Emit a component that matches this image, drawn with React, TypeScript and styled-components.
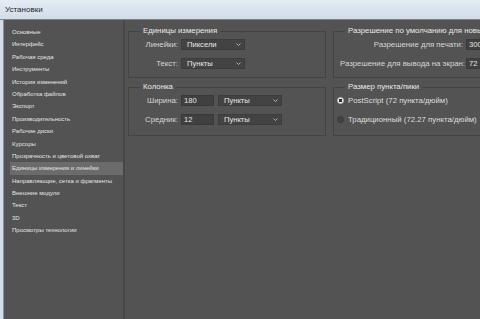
import { createGlobalStyle, styled } from 'styled-components';

const GlobalStyle = createGlobalStyle`
    html, body {
        margin: 0;
        padding: 0;
        background: #535353;
    }
    body {
        font-family: "Liberation Sans", Arial, sans-serif;
        overflow: hidden;
    }
`;

const Window = styled.div`
    display: flex;
    flex-direction: column;
    width: 480px;
    height: 319px;
    overflow: hidden;
`;

const TitleBar = styled.div`
    display: flex;
    align-items: center;
    flex: none;
    height: 19px;
    padding-left: 5px;
    background: linear-gradient(#e4ecf4, #d2dce8);
    color: #1d2430;
    font-size: 8px;
    border-bottom: 1px solid #7d848c;
`;

const Body = styled.div`
    display: flex;
    flex: 1;
    min-height: 0;
`;

const Frame = styled.div`
    flex: none;
    width: 3px;
    background: #d3dde8;
    border-right: 1px solid #8b939c;
`;

const Sidebar = styled.ul`
    flex: none;
    list-style: none;
    margin: 0;
    width: 113px;
    padding: 6px 0 0 6px;
    border-right: 2px solid #474747;
`;

const NavItem = styled.li<{ $active?: boolean }>`
    height: 12.4px;
    line-height: 12.4px;
    padding-left: 2px;
    font-size: 6px;
    white-space: nowrap;
    color: #e4e4e4;
    background: ${(p) => (p.$active ? '#6b6b6b' : 'transparent')};
`;

const Content = styled.div`
    flex: none;
    display: grid;
    grid-template-columns: 198px 200px;
    grid-template-rows: 52px 54px;
    column-gap: 7px;
    row-gap: 4px;
    padding: 6px 0 0 3px;
    align-content: start;
`;

const Group = styled.fieldset`
    margin: 0;
    padding: 2px 6px 0 6px;
    border: 1px solid #444444;
    min-width: 0;
    display: flex;
    flex-direction: column;
    gap: 7px;
`;

const Legend = styled.legend`
    margin-left: 5px;
    padding: 0 3px;
    font-size: 7.8px;
    line-height: 10px;
    color: #e8e8e8;
    white-space: nowrap;
`;

const Row = styled.div<{ $label: number }>`
    display: grid;
    grid-template-columns: ${(p) => p.$label}px auto auto;
    column-gap: 3px;
    align-items: center;
    justify-content: start;
    height: 12px;
`;

const Label = styled.span`
    font-size: 7.8px;
    color: #d6d6d6;
    text-align: right;
    white-space: nowrap;
`;

const Select = styled.div<{ $w: number }>`
    display: flex;
    align-items: center;
    justify-content: space-between;
    width: ${(p) => p.$w}px;
    height: 11px;
    box-sizing: border-box;
    padding: 0 3px 0 5px;
    background: #434343;
    border: 1px solid #3c3c3c;
    font-size: 7.6px;
    color: #e6e6e6;
`;

const Input = styled.div<{ $w: number }>`
    display: flex;
    align-items: center;
    width: ${(p) => p.$w}px;
    height: 11px;
    box-sizing: border-box;
    padding-left: 2px;
    margin-right: 1px;
    background: #404040;
    border: 1px solid #393939;
    font-size: 7.6px;
    color: #e6e6e6;
`;

const RadioRow = styled.div`
    display: flex;
    align-items: center;
    gap: 4px;
    height: 12px;
    margin-left: -3px;
    font-size: 7.8px;
    color: #dedede;
    white-space: nowrap;
`;

const RadioDot = styled.span<{ $on?: boolean }>`
    width: 7px;
    height: 7px;
    border-radius: 50%;
    box-sizing: border-box;
    background: ${(p) => (p.$on ? 'radial-gradient(circle, #333 0 1.6px, #e8e8e8 1.8px)' : '#424242')};
    border: 1px solid ${(p) => (p.$on ? '#cfcfcf' : '#3a3a3a')};
`;

function Chevron() {
    return (
        <svg width="5" height="3" viewBox="0 0 5 3">
            <path d="M0.5 0.5 L2.5 2.5 L4.5 0.5" fill="none" stroke="#bdbdbd" strokeWidth="0.9" />
        </svg>
    );
}

function Dropdown({ value, width }: { value: string; width: number }) {
    return (
        <Select $w={width}>
            <span>{value}</span>
            <Chevron />
        </Select>
    );
}

const sections = [
    'Основные',
    'Интерфейс',
    'Рабочая среда',
    'Инструменты',
    'История изменений',
    'Обработка файлов',
    'Экспорт',
    'Производительность',
    'Рабочие диски',
    'Курсоры',
    'Прозрачность и цветовой охват',
    'Единицы измерения и линейки',
    'Направляющие, сетка и фрагменты',
    'Внешние модули',
    'Текст',
    '3D',
    'Просмотры технологии',
];

export default function App() {
    return (
        <Window>
            <GlobalStyle />
            <TitleBar>Установки</TitleBar>
            <Body>
                <Frame />
                <Sidebar>
                    {sections.map((s) => (
                        <NavItem key={s} $active={s === 'Единицы измерения и линейки'}>
                            {s}
                        </NavItem>
                    ))}
                </Sidebar>
                <Content>
                    <Group>
                        <Legend>Единицы измерения</Legend>
                        <Row $label={43}>
                            <Label>Линейки:</Label>
                            <Dropdown value="Пиксели" width={64} />
                        </Row>
                        <Row $label={43}>
                            <Label>Текст:</Label>
                            <Dropdown value="Пункты" width={64} />
                        </Row>
                    </Group>
                    <Group>
                        <Legend>Разрешение по умолчанию для новых документов</Legend>
                        <Row $label={123}>
                            <Label>Разрешение для печати:</Label>
                            <Input $w={30}>300</Input>
                        </Row>
                        <Row $label={123}>
                            <Label>Разрешение для вывода на экран:</Label>
                            <Input $w={30}>72</Input>
                        </Row>
                    </Group>
                    <Group>
                        <Legend>Колонка</Legend>
                        <Row $label={43}>
                            <Label>Ширина:</Label>
                            <Input $w={33}>180</Input>
                            <Dropdown value="Пункты" width={64} />
                        </Row>
                        <Row $label={43}>
                            <Label>Средник:</Label>
                            <Input $w={33}>12</Input>
                            <Dropdown value="Пункты" width={64} />
                        </Row>
                    </Group>
                    <Group>
                        <Legend>Размер пункта/пики</Legend>
                        <RadioRow>
                            <RadioDot $on />
                            PostScript (72 пункта/дюйм)
                        </RadioRow>
                        <RadioRow>
                            <RadioDot />
                            Традиционный (72.27 пункта/дюйм)
                        </RadioRow>
                    </Group>
                </Content>
            </Body>
        </Window>
    );
}
